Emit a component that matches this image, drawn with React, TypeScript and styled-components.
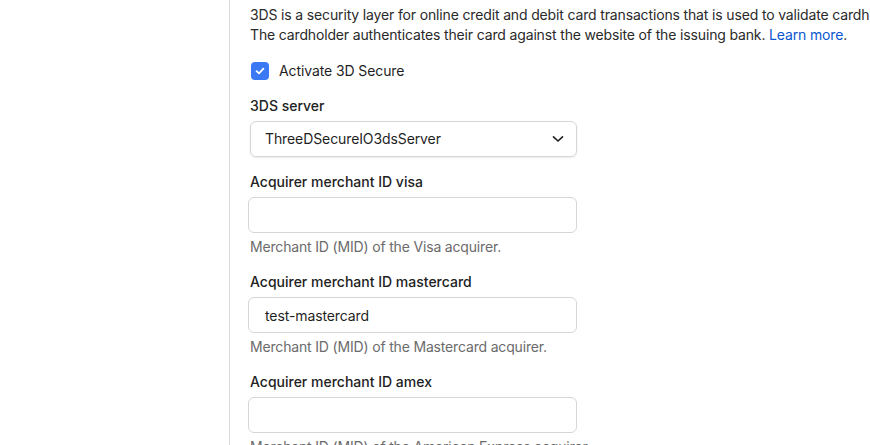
import React from "react";
import styled, { createGlobalStyle } from "styled-components";

const GlobalStyle = createGlobalStyle`
  html, body {
    margin: 0;
    padding: 0;
    background: #ffffff;
    overflow: hidden;
  }
  body {
    font-family: Inter, "Noto Sans", "Liberation Sans", sans-serif;
    font-size: 14px;
    line-height: 20px;
    color: #1f1f1f;
  }
`;

const fields = [
  { label: "Acquirer merchant ID visa", value: "", help: "Merchant ID (MID) of the Visa acquirer." },
  {
    label: "Acquirer merchant ID mastercard",
    value: "test-mastercard",
    help: "Merchant ID (MID) of the Mastercard acquirer.",
  },
  {
    label: "Acquirer merchant ID amex",
    value: "",
    help: "Merchant ID (MID) of the American Express acquirer.",
  },
];

const App = () => (
  <Page>
    <GlobalStyle />
    <Sidebar />
    <Main>
      <Description>
        <Line>
          3DS is a security layer for online credit and debit card transactions that is used to
          validate cardholders.
        </Line>
        <Line>
          The cardholder authenticates their card against the website of the issuing bank.{" "}
          <Link href="#">Learn more</Link>.
        </Line>
      </Description>

      <CheckRow>
        <CheckBox>
          <svg width="12" height="12" viewBox="0 0 12 12" fill="none">
            <path
              d="M2.6 6.2 L5 8.4 L9.4 3.6"
              stroke="#ffffff"
              strokeWidth="1.8"
              strokeLinecap="round"
              strokeLinejoin="round"
            />
          </svg>
        </CheckBox>
        <span>Activate 3D Secure</span>
      </CheckRow>

      <Field>
        <Label>3DS server</Label>
        <Select>
          <span>ThreeDSecureIO3dsServer</span>
          <svg width="12" height="8" viewBox="0 0 12 8" fill="none">
            <path
              d="M1.5 1.8 L6 6 L10.5 1.8"
              stroke="#1f1f1f"
              strokeWidth="1.6"
              strokeLinecap="round"
              strokeLinejoin="round"
            />
          </svg>
        </Select>
      </Field>

      {fields.map((f) => (
        <Field key={f.label}>
          <Label>{f.label}</Label>
          <TextInput type="text" defaultValue={f.value} />
          <Help>{f.help}</Help>
        </Field>
      ))}
    </Main>
  </Page>
);

const Page = styled.div`
  display: grid;
  grid-template-columns: 230px 1fr;
  height: 445px;
  width: 870px;
  overflow: hidden;
`;

const Sidebar = styled.aside`
  border-right: 1px solid #d9d9d9;
  background: #ffffff;
`;

const Main = styled.main`
  padding: 5px 20px 0 20px;
  display: flex;
  flex-direction: column;
  min-width: 0;
`;

const Description = styled.div`
  color: #2a2a2a;
  letter-spacing: -0.15px;
`;

const Line = styled.div`
  white-space: nowrap;
`;

const Link = styled.a`
  color: #0b57d0;
  text-decoration: none;
`;

const CheckRow = styled.label`
  margin-top: 16px;
  display: flex;
  align-items: center;
  gap: 10px;
  height: 20px;
  color: #1f1f1f;
  padding-left: 1px;
  letter-spacing: -0.1px;
`;

const CheckBox = styled.span`
  width: 18px;
  height: 18px;
  border-radius: 4px;
  background: #3b78f3;
  display: flex;
  align-items: center;
  justify-content: center;
`;

const Field = styled.div`
  margin-top: 15px;
  display: flex;
  flex-direction: column;
`;

const Label = styled.div`
  font-weight: 500;
  color: #222222;
  margin-bottom: 5px;
`;

const Select = styled.div`
  box-sizing: border-box;
  width: 327px;
  height: 36px;
  border: 1px solid #d6d6d6;
  border-radius: 6px;
  box-shadow: 0 1px 2px rgba(0, 0, 0, 0.08);
  padding: 0 12px 0 14px;
  display: flex;
  align-items: center;
  justify-content: space-between;
  color: #1f1f1f;
  letter-spacing: -0.1px;
`;

const TextInput = styled.input`
  box-sizing: border-box;
  width: 329px;
  height: 36px;
  margin-left: -2px;
  border: 1px solid #d6d6d6;
  border-radius: 6px;
  padding: 0 16px;
  font: inherit;
  letter-spacing: -0.1px;
  color: #1f1f1f;
  background: #ffffff;
  outline: none;
`;

const Help = styled.div`
  margin-top: 4px;
  color: #6b6b6b;
  white-space: nowrap;
  letter-spacing: -0.17px;
`;

export default App;
